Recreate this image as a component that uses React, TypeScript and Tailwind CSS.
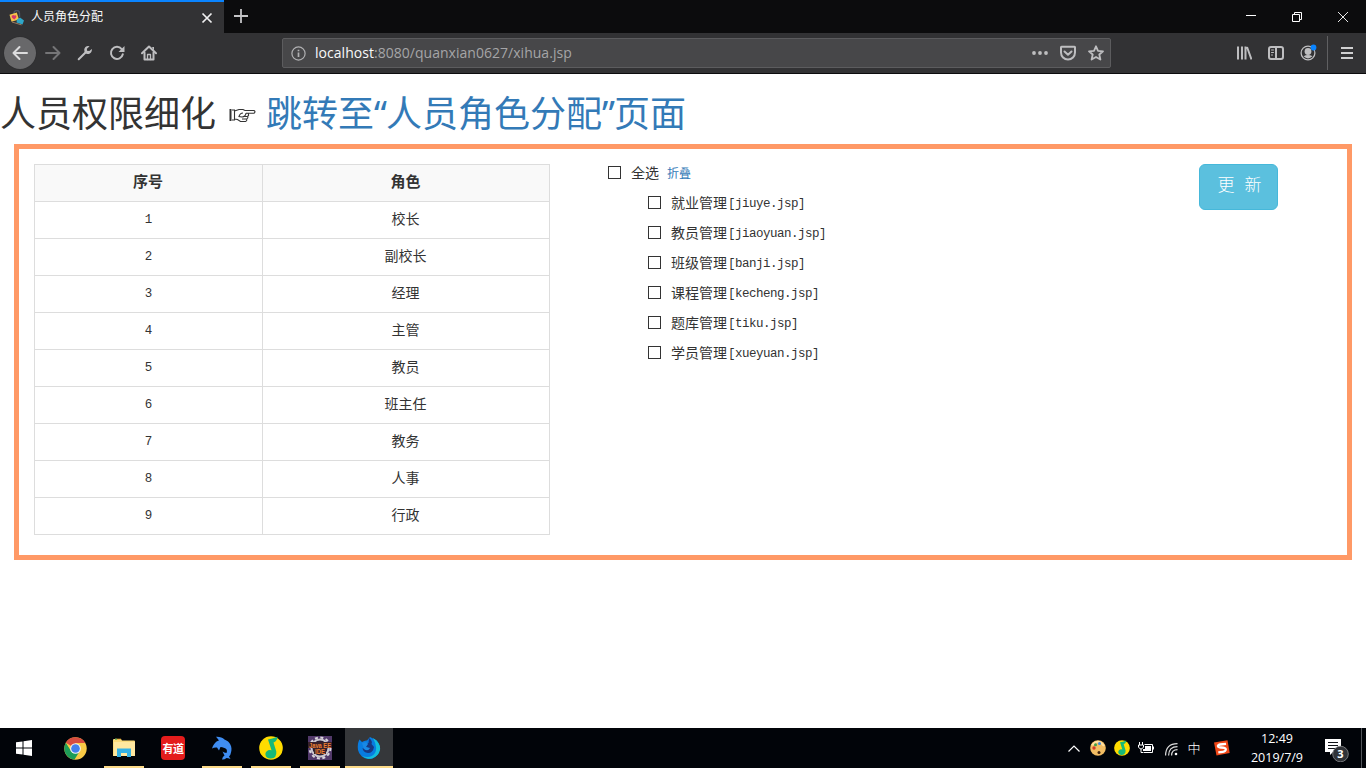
import React from "react";

const roles = ["校长", "副校长", "经理", "主管", "教员", "班主任", "教务", "人事", "行政"];

const menus = [
  { name: "就业管理", page: "[jiuye.jsp]" },
  { name: "教员管理", page: "[jiaoyuan.jsp]" },
  { name: "班级管理", page: "[banji.jsp]" },
  { name: "课程管理", page: "[kecheng.jsp]" },
  { name: "题库管理", page: "[tiku.jsp]" },
  { name: "学员管理", page: "[xueyuan.jsp]" },
];

function Favicon() {
  return (
    <svg width="16" height="16" viewBox="0 0 16 16">
      <path d="M5 5V3.200A2.600 2.600 0 0 1 10.500 3.200V7" fill="none" stroke="#4a5262" strokeWidth="1.400" />
      <path d="M.5 4.800 7.800 2.600 10 9.600 2.500 11.800Z" fill="#f3c14b" />
      <path d="M2.600 6.300a1.500 1.500 0 0 1 2.600-.7 1.500 1.500 0 0 1 2.200 1C7.300 8 6 8.600 5.400 9.500 4.500 9 2.700 8 2.600 6.300Z" fill="#d6336c" />
      <path d="M8 9.500 11 7.500 15 10.500 13.500 14.500 7.500 12.500Z" fill="#2fa7c9" />
      <path d="M3 12 12.500 14.900" stroke="#9b7b61" strokeWidth="1" />
    </svg>
  );
}

function TabBar() {
  return (
    <div className="flex h-[33px] bg-[#0c0c0d]">
      <div className="flex w-[224px] items-center border-t-2 border-[#0a84ff] bg-[#323234] pl-[9px] pr-[11px]">
        <Favicon />
        <span className="-mt-[3px] ml-[6px] flex-1 font-['Noto_Sans_CJK_SC',sans-serif] text-[12px] leading-4 text-[#f9f9fa]">人员角色分配</span>
        <svg width="12" height="12" viewBox="0 0 12 12" fill="none" stroke="#f0f0f1" strokeWidth="1.7">
          <path d="M1.500 1.500 10.500 10.500M10.500 1.500 1.500 10.500" />
        </svg>
      </div>
      <div className="flex flex-1 items-center pb-px pl-[9px]">
        <svg width="16" height="16" viewBox="0 0 16 16" fill="none" stroke="#c4c4c6" strokeWidth="1.8">
          <path d="M8 1v14M1 8h14" />
        </svg>
      </div>
      <div className="flex w-[138px] items-center">
        <div className="flex flex-1 justify-center">
          <svg width="10" height="10" viewBox="0 0 10 10"><path d="M0 3.500h10" stroke="#fff" /></svg>
        </div>
        <div className="flex flex-1 justify-center">
          <svg width="10" height="10" viewBox="0 0 10 10" fill="none" stroke="#fff"><path d="M.5 2.500h7v7h-7zM2.500 2.500v-2h7v7h-2" /></svg>
        </div>
        <div className="flex flex-1 justify-center">
          <svg width="10" height="10" viewBox="0 0 10 10" stroke="#fff" strokeWidth=".9"><path d="M0 0 10 10M10 0 0 10" /></svg>
        </div>
      </div>
    </div>
  );
}

const line = { fill: "none", stroke: "#bebec0", strokeWidth: 2, strokeLinecap: "round", strokeLinejoin: "round" } as const;

function Toolbar() {
  return (
    <div className="flex h-[41px] items-center border-b border-[#0c0c0d] bg-[#323234] pl-[4px]">
      <div className="flex h-8 w-8 items-center justify-center rounded-full bg-[#68686a] shadow-[0_0_1px_#202022]">
        <svg width="16" height="16" viewBox="0 0 16 16" {...line} stroke="#dcdcdd"><path d="M15 8H1.500M7.500 2 1.500 8l6 6" /></svg>
      </div>
      <div className="flex w-8 justify-center pl-[2px]">
        <svg width="16" height="16" viewBox="0 0 16 16" {...line} stroke="#757577"><path d="M1 8h13.500M8.500 2l6 6-6 6" /></svg>
      </div>
      <div className="flex w-8 justify-center pl-[2px]">
        <svg width="16" height="16" viewBox="0 0 16 16">
          <path d="M1.700 14.300 9 7" stroke="#bebec0" strokeWidth="2" strokeLinecap="round" />
          <path d="M12.600 1.200A4 4 0 0 0 7.400 6.200C7.700 8 9 9.100 10.800 9 13 9 15.200 7 14.900 4L12.300 6.100 10 5.800 9.900 3.800Z" fill="#bebec0" />
        </svg>
      </div>
      <div className="flex w-8 justify-center pl-[2px]">
        <svg width="16" height="16" viewBox="0 0 16 16">
          <path d="M12.700 4.200A6 6 0 1 0 13.800 9.200" {...line} />
          <path d="M15.500 1v6h-6Z" fill="#bebec0" />
        </svg>
      </div>
      <div className="flex w-8 justify-center pl-[2px]">
        <svg width="16" height="16" viewBox="0 0 16 16">
          <path d="M1 8.300 8 1.500l7 6.800" {...line} />
          <path d="M3.500 7.500V14.500h9V7.500" {...line} />
          <path d="M6.500 14.500V9.500h3V14.500" {...line} strokeWidth={1.3} />
          <path d="M11 2h2v4" fill="#bebec0" />
        </svg>
      </div>
      <div className="ml-[118px] flex h-[30px] w-[829px] items-center rounded-[2px] border border-[#5c5c5e] bg-[#474749] pl-[8px] pr-[6px]">
        <svg width="15" height="15" viewBox="0 0 15 15" fill="none" stroke="#b1b1b3" strokeWidth="1.2">
          <circle cx="7.500" cy="7.500" r="6.600" /><path d="M7.500 6.500v4.500M7.500 3.700v1.500" strokeWidth="1.700" />
        </svg>
        <div className="ml-[9px] flex-1 whitespace-nowrap font-['Open_Sans','Noto_Sans',sans-serif] text-[14px] leading-5 tracking-[0.03px] text-[#a5a5a7]"><span className="text-[#f9f9fa]">localhost</span>:8080/quanxian0627/xihua.jsp</div>
        <div className="flex items-center gap-[12px]">
          <svg width="16" height="16" viewBox="0 0 16 16" fill="#bebec0"><circle cx="2" cy="8" r="1.900" /><circle cx="8" cy="8" r="1.900" /><circle cx="14" cy="8" r="1.900" /></svg>
          <svg width="16" height="16" viewBox="0 0 16 16" {...line}><path d="M1.500 1.800h13q.5 0 .5.500V7.500a7 7 0 0 1-14 0V2.300q0-.5.5-.5ZM4.500 6.500 8 9.800l3.500-3.300" /></svg>
          <svg width="16" height="16" viewBox="0 0 16 16" {...line} strokeWidth={1.8}><path d="m8 1.300 2 4.500 5 .5-3.700 3.200L12.400 14.500 8 12l-4.400 2.500 1.100-5L1 6.300l5-.5Z" /></svg>
        </div>
      </div>
      <div className="ml-[117px] flex w-8 justify-center">
        <svg width="16" height="16" viewBox="0 0 16 16" {...line} strokeLinecap="butt"><path d="M2 1.500V14.500M6 1.500V14.500M9.500 1.500V14.500M11 2 15.500 14.500" /></svg>
      </div>
      <div className="flex w-8 justify-center">
        <svg width="16" height="16" viewBox="0 0 16 16" {...line}><rect x="1" y="2" width="14" height="12" rx="2" /><path d="M8 2v12" /><path d="M3.500 5h2M3.500 7.500h2M3.500 10h1" strokeWidth="1" /></svg>
      </div>
      <div className="flex w-8 justify-center">
        <svg width="18" height="18" viewBox="0 0 18 18">
          <circle cx="9" cy="9" r="6.900" fill="none" stroke="#bebec0" strokeWidth="1.300" />
          <circle cx="9" cy="7.500" r="3.400" fill="#bebec0" /><path d="M4.500 12.300q2-1.300 4.500-1.300t4.500 1.300Q9 16.500 4.500 12.300Z" fill="#bebec0" />
          <circle cx="14.500" cy="3.500" r="2.900" fill="#0a84ff" />
        </svg>
      </div>
      <div className="ml-[3px] h-[34px] w-px bg-[#606062]" />
      <div className="flex flex-1 justify-center">
        <svg width="12" height="12" viewBox="0 0 12 12" stroke="#d0d0d1" strokeWidth="2"><path d="M0 1h12M0 6h12M0 11h12" /></svg>
      </div>
    </div>
  );
}

function Page() {
  return (
    <main className="h-[654px] bg-white font-['Liberation_Mono','Noto_Sans_CJK_SC',monospace] text-[14px] text-[#333]">
      <h1 className="flex h-[70px] items-center whitespace-nowrap pt-[9px] font-['Noto_Sans','Noto_Sans_CJK_SC',sans-serif] text-[36px] font-normal leading-10">
        <span className="w-[229px]">人员权限细化</span>
        <svg className="mt-[2px]" width="27" height="16" viewBox="0 0 27 16" fill="none" stroke="#333" strokeWidth="1.100">
          <path d="M1.500 2v12" strokeWidth="2" />
          <path d="M3 3h2.500v10H3M5.500 4 10 2.500h4l2 1h9q2 1.200 0 2.700h-8M5.500 12l3 .5 3 2h5q2-1 1-2.500 2-.8 1-2.700 2-1 .5-3M14 6q-3 0-4 3.500l3 .5q3.500-.2 4-3.800M14 9.500h4M13 12h4" />
        </svg>
        <a className="ml-[10px] text-[#337ab7]">跳转至<span className="inline-block w-[12px] text-center">“</span>人员角色分配<span className="inline-block w-[12px] text-center">”</span>页面</a>
      </h1>
      <section className="mx-[14px] flex h-[416px] border-[5px] border-[#ff9966] p-[15px]">
        <table className="h-[371px] w-[516px] table-fixed border-collapse text-center leading-5">
          <thead className="bg-[#f9f9f9]">
            <tr className="h-[37px]">
              <th className="w-[228px] border border-[#ddd] p-0 pr-px pt-[2px] text-[15px] font-bold">序号</th>
              <th className="border border-[#ddd] p-0 pr-px pt-[2px] text-[15px] font-bold">角色</th>
            </tr>
          </thead>
          <tbody>
            {roles.map((role, i) => (
              <tr key={role} className="h-[37px]">
                <td className="border border-[#ddd] p-0 text-[12.5px]">{i + 1}</td>
                <td className="border border-[#ddd] p-0 pr-px">{role}</td>
              </tr>
            ))}
          </tbody>
        </table>
        <div className="ml-[58px] w-[591px] leading-[28px]">
          <div className="-mt-[6px] flex h-[30px] items-center">
            <input type="checkbox" className="-mt-[2px] h-[13px] w-[13px] appearance-none border border-[#333]" />
            <span className="ml-[10px] pt-[2px]">全选</span>
            <a className="ml-[8px] pt-[4px] text-[12px] text-[#337ab7]">折叠</a>
          </div>
          <ul className="pl-[40px]">
            {menus.map((m) => (
              <li key={m.name} className="flex h-[30px] items-center">
                <input type="checkbox" className="-mt-[2px] h-[13px] w-[13px] appearance-none border border-[#333]" />
                <span className="ml-[10px] pt-[2px]">{m.name}</span>
                <span className="ml-px pt-[2px] text-[12.5px] tracking-[-0.5px]">{m.page}</span>
              </li>
            ))}
          </ul>
        </div>
        <button className="flex h-[46px] w-[79px] items-center justify-center rounded-[6px] border border-[#46b8da] bg-[#5bc0de] pl-[2px] text-[17px] font-light leading-6 text-white">
          <span>更</span><span className="ml-[10px]">新</span>
        </button>
      </section>
    </main>
  );
}

function MusicIcon({ size }: { size: number }) {
  return (
    <svg width={size} height={size} viewBox="0 0 24 24">
      <circle cx="12" cy="12" r="11.800" fill="#ffdc00" />
      <path d="M9 3.500Q13 3 18.500.8 18 5.500 14.500 6.500l2.800 9Q18 22 12 22.500C7 23 5 18 7.500 15.500q2.200-2.100 5-1.200Z" fill="#17b978" />
    </svg>
  );
}

function TaskButton({ children, open = false, active = false }: { children: React.ReactNode; open?: boolean; active?: boolean }) {
  return (
    <div className={active ? "flex h-10 w-12 flex-col items-center bg-[#35373a]" : "flex h-10 w-12 flex-col items-center"}>
      <div className="flex h-[38px] items-center pt-[2px]">{children}</div>
      {(open || active) && <div className={active ? "h-[2px] w-12 bg-[#fcda88]" : "h-[2px] w-10 bg-[#fcda88]"} />}
    </div>
  );
}

function Taskbar() {
  return (
    <footer className="flex h-10 bg-[#010409]">
      <div className="mr-[3px] flex w-12 items-center justify-center">
        <svg width="16" height="16" viewBox="0 0 16 16" fill="#fff"><path d="M0 2.300 6.500 1.400V7.500H0zM7.500 1.200 16 0V7.500H7.500zM0 8.500h6.500v6.100L0 13.700zM7.500 8.500H16V16L7.500 14.800z" /></svg>
      </div>
      <div className="flex gap-px">
        <TaskButton>
          <svg width="23" height="23" viewBox="0 0 24 24">
            <circle cx="12" cy="12" r="11.700" fill="#f9ca45" />
            <path d="M12 12 1.900 6A11.700 11.700 0 0 1 22.200 6.300H12Z" fill="#d74c40" />
            <path d="M1.900 6A11.700 11.700 0 0 0 11 23.600L16.500 14.500 12 17 7 14Z" fill="#1d9d58" />
            <circle cx="12" cy="12" r="5.600" fill="#f4f4f4" /><circle cx="12" cy="12" r="4.500" fill="#4380ed" />
          </svg>
        </TaskButton>
        <TaskButton open>
          <svg width="22" height="20" viewBox="0 0 22 20">
            <path d="M0 18V2q0-1 1-1h7l1 1.500h12q1 0 1 1V18Z" fill="#fbdc7d" /><path d="M1 4h21v14H1z" fill="#ffe8a0" /><path d="M2 1.200h6" stroke="#e8a82f" /><path d="M2 1.200h2" stroke="#45b86e" />
            <path d="M4 19v-8.500h14V19h-4v-4H8v4Z" fill="#35b2e5" />
          </svg>
        </TaskButton>
        <TaskButton>
          <div className="flex h-6 w-6 items-center justify-center rounded-[4px] bg-[#e41c1c] font-['Noto_Sans_CJK_SC',sans-serif] text-[11px] font-bold leading-6 tracking-[-0.5px] text-white">有道</div>
        </TaskButton>
        <TaskButton open>
          <svg width="22" height="24" viewBox="0 0 22 24">
            <path d="M1 12.500C3 7 5.500 5 8 4.500Q6 2 5 .8 10.500.5 13.500 3.500C19 5.500 21.800 11 20 16.500Q19.500 19.500 18 20.500L19.500 23Q17 22 15.500 22 13 24 11 23.500 11.500 20.500 13.500 19.500L11.500 15.500Q13 16.500 15.500 17 17 13 13.500 12 11 11 9.500 11L8 14.500 6 11.500Q3.500 11 1 12.500Z" fill="#3f8df2" />
          </svg>
        </TaskButton>
        <TaskButton open><MusicIcon size={24} /></TaskButton>
        <TaskButton open>
          <svg width="24" height="24" viewBox="0 0 24 24">
            <rect width="24" height="24" fill="#51396a" />
            <circle cx="12" cy="12" r="8.500" fill="#281c35" stroke="#cbc8ce" strokeWidth="2" />
            <circle cx="12" cy="12" r="10.500" fill="none" stroke="#d9d7dc" strokeWidth="2" strokeDasharray="3 2.500" />
            <path d="M0 6h24v6H0zM6 12h12v6H6z" fill="#38212a" />
            <text x="1" y="11.500" textLength="22" lengthAdjust="spacingAndGlyphs" fill="#ed8033" fontFamily="Liberation Sans" fontSize="7" fontWeight="bold">Java EE</text>
            <text x="7" y="17.500" textLength="10" lengthAdjust="spacingAndGlyphs" fill="#ed8033" fontFamily="Liberation Sans" fontSize="7" fontWeight="bold">IDE</text>
          </svg>
        </TaskButton>
        <TaskButton active>
          <svg width="24" height="24" viewBox="0 0 24 24">
            <path d="M2.500 3.500 5 6q3-2 5-1.500L13 1l3 1.500 4 2 2.500 5v5A11 11 0 0 1 1 14Q0 8 2.500 3.500Z" fill="#087ce1" />
            <path d="M16 2q8 5 7 12A11 11 0 0 1 5 20q9 3 13-3 3-6-2-15Z" fill="#13bddc" />
            <path d="M12 2q4 3 2.500 6l2.500 3q-1 6-6 6-5-.5-5.500-5l3 1.500 3.500-1-4-2V8l3.500-1Z" fill="#183882" />
            <path d="M5 7q5-2 6 1l-2 3 4 1q-2 4-6 1Z" fill="#1989e5" />
          </svg>
        </TaskButton>
      </div>
      <div className="ml-auto flex items-center">
        <div className="flex w-6 justify-center"><svg width="12" height="7" viewBox="0 0 12 7" fill="none" stroke="#fff" strokeWidth="1.200"><path d="m.5 6.500 5.500-5.500 5.500 5.500" /></svg></div>
        <div className="flex w-6 justify-center">
          <svg width="16" height="16" viewBox="0 0 16 16"><circle cx="8" cy="8" r="7.800" fill="#f2bd63" /><path d="M2 5Q8-2 14 6" fill="none" stroke="#ffe0a0" strokeWidth="2" /><circle cx="4" cy="8" r="1.700" fill="#d23a2a" /><circle cx="5.500" cy="4.800" r="1.500" fill="#3e9f4a" /><circle cx="9.500" cy="3.500" r="1.500" fill="#3f86d8" /><circle cx="9" cy="12.500" r="1.500" fill="#3d200b" /></svg>
        </div>
        <div className="flex w-6 justify-center"><MusicIcon size={16} /></div>
        <div className="flex w-6 justify-center">
          <svg width="16" height="12" viewBox="0 0 16 12"><path d="M1.500 0v3M4.500 0v3M.5 3h5v2q-1 2-2.500 2T.5 5ZM3 7v3.500h2" fill="none" stroke="#fff" /><path d="M6.500 2.500h8v8h-9M15.500 4.500v3" fill="none" stroke="#fff" /><path d="M7 4h6v5H5V7h2z" fill="#fff" /></svg>
        </div>
        <div className="flex w-[25px] justify-center pl-px pt-[2px]">
          <svg width="13" height="13" viewBox="0 0 13 13" fill="none" stroke="#ddd" strokeWidth="1.200"><path d="M.6 12.500Q.6.6 12.500.6M3.600 12.500Q3.600 3.600 12.500 3.600M6.600 12.500Q6.600 6.600 12.500 6.600" /><circle cx="11" cy="11" r="1.300" fill="#fff" stroke="none" /></svg>
        </div>
        <div className="w-[22px] text-center font-['Noto_Sans_CJK_SC',sans-serif] text-[13px] font-light leading-5 text-white">中</div>
        <div className="flex w-[34px] justify-center">
          <svg width="16" height="16" viewBox="0 0 16 16"><path d="M0 2.500 13.500.3 15.700 13 2.500 15.500Z" fill="#f04717" /><path d="M12 3.800 6 4.500q-2.500.5-2 2 .3 1 3 1 5 0 4.800 2-.2 2-3 2.300l-4.500.5" fill="none" stroke="#fff" strokeWidth="2.300" /></svg>
        </div>
      </div>
      <div className="w-[76px] pt-[1px] text-center font-['Open_Sans','Noto_Sans',sans-serif] text-[12.5px] leading-[19px] text-white"><div>12:49</div><div>2019/7/9</div></div>
      <div className="ml-[10px] flex w-[36px] items-center pt-[2px]">
        <svg width="26" height="26" viewBox="0 0 26 26">
          <path d="M0 3h16v13H8l-3 3v-3H0Z" fill="#fff" /><path d="M3 6.500h10M3 9.500h10M3 12.500h10" stroke="#111419" />
          <circle cx="15.500" cy="18" r="7.800" fill="#303338" stroke="#8a8b8e" strokeWidth=".8" />
          <text x="15.500" y="22" textAnchor="middle" fontFamily="Open Sans" fontSize="11" fontWeight="bold" fill="#fff">3</text>
        </svg>
      </div>
      <div className="mr-[4px] w-px bg-[#52555a]" />
    </footer>
  );
}

export default function App() {
  return (
    <div className="flex h-[768px] w-[1366px] flex-col overflow-hidden bg-white">
      <TabBar />
      <Toolbar />
      <Page />
      <Taskbar />
    </div>
  );
}
